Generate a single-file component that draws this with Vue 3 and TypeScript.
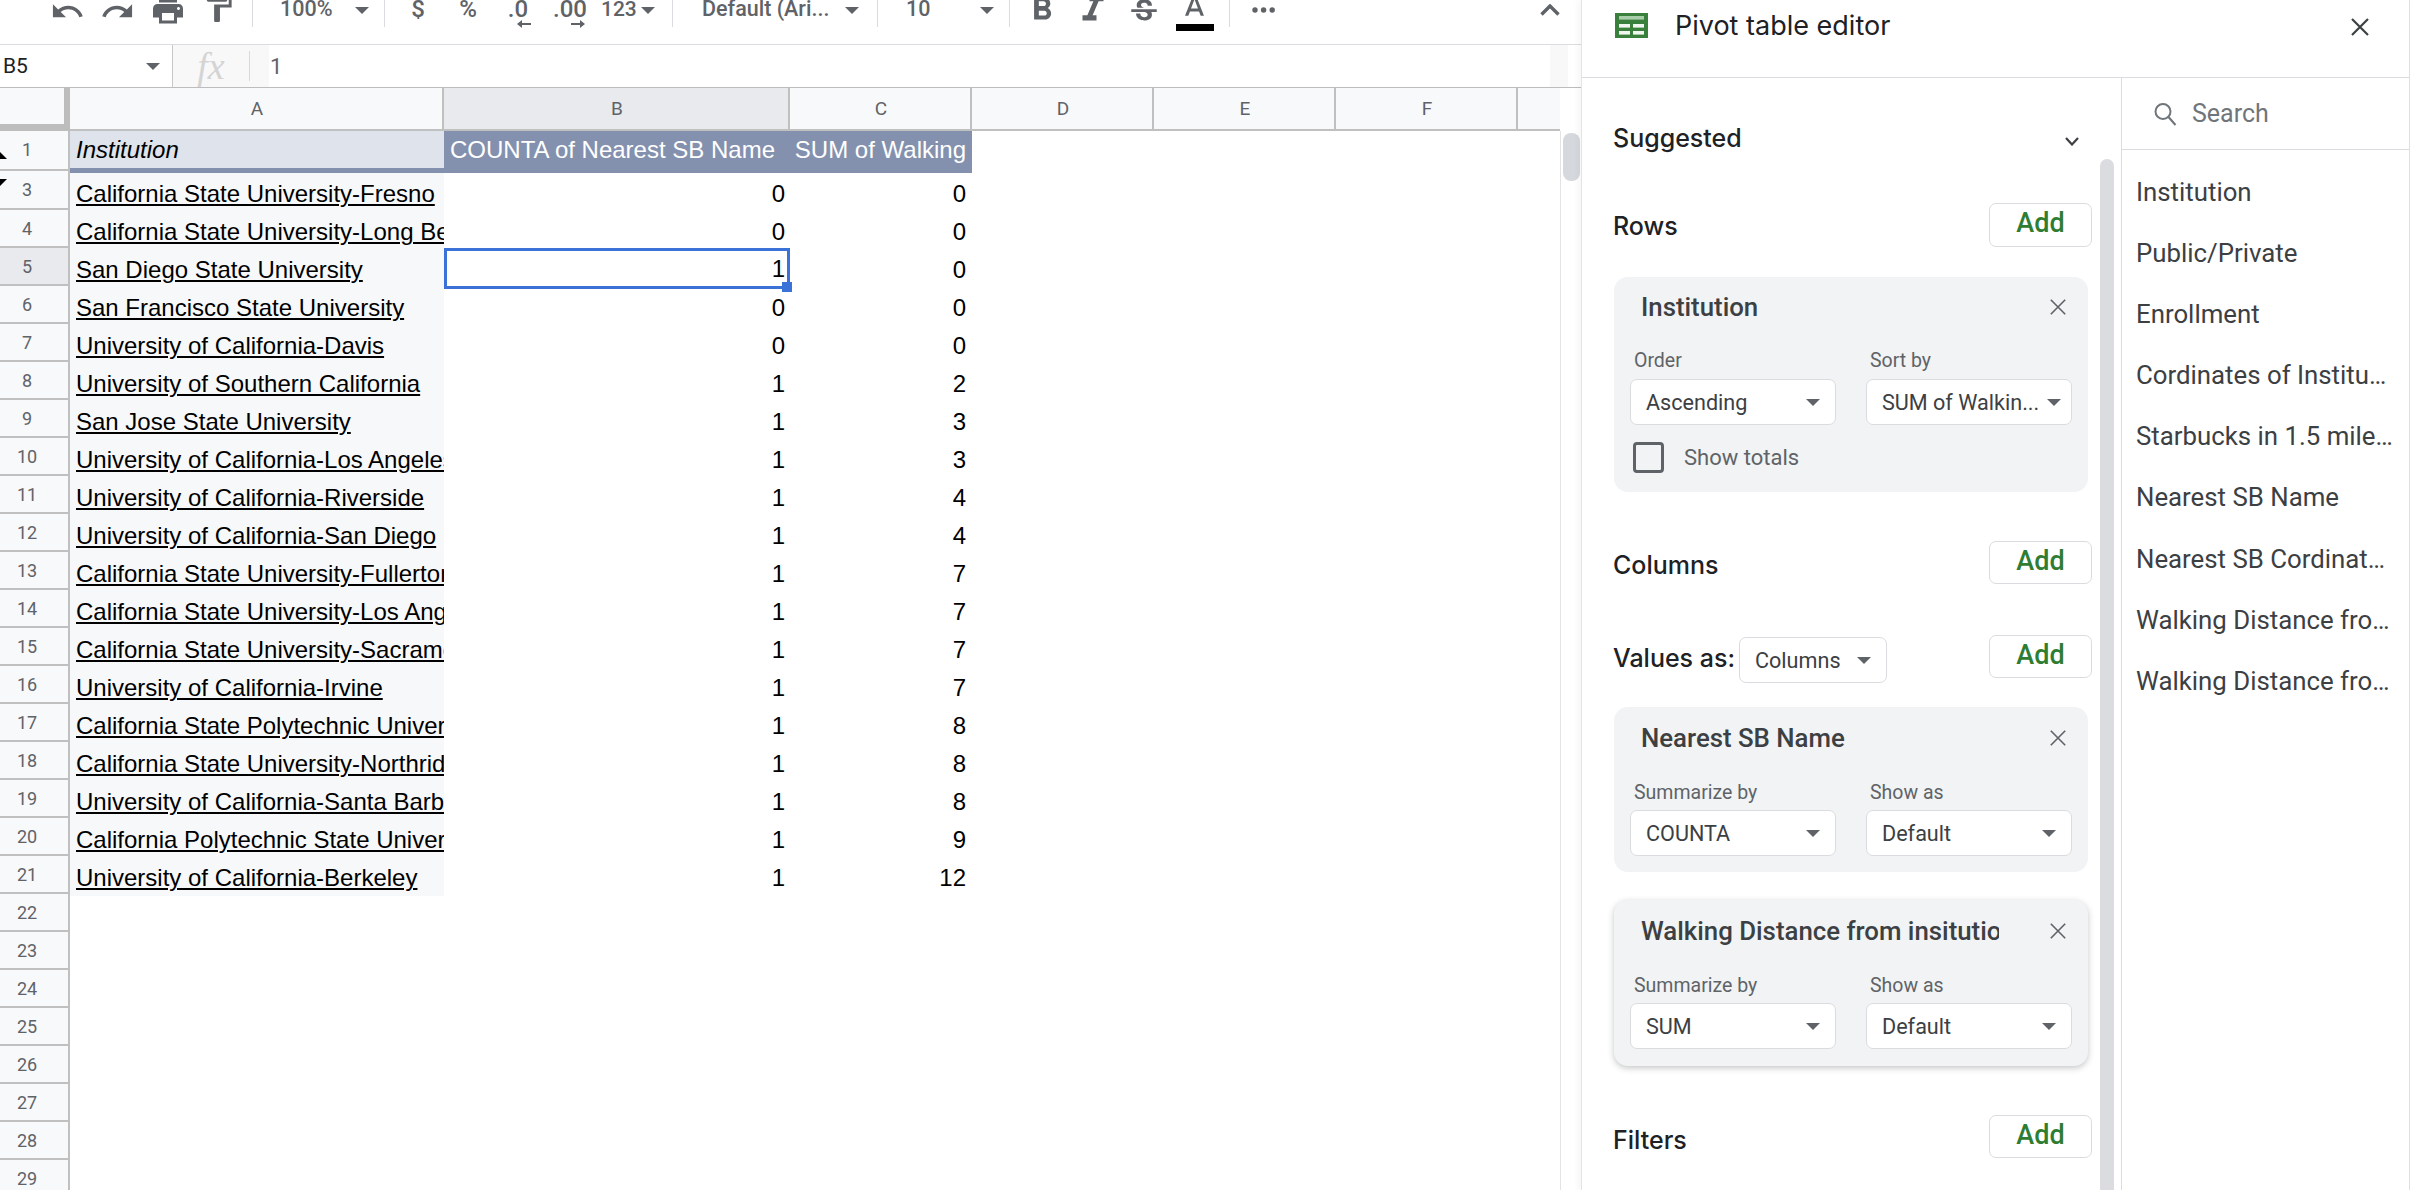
<script setup lang="ts">
interface SheetRow {
  num: number
  name: string
  count: number
  sum: number
}

const colHeads = ['A', 'B', 'C', 'D', 'E', 'F', '']

const rows: SheetRow[] = [
  { num: 3, name: 'California State University-Fresno', count: 0, sum: 0 },
  { num: 4, name: 'California State University-Long Beach', count: 0, sum: 0 },
  { num: 5, name: 'San Diego State University', count: 1, sum: 0 },
  { num: 6, name: 'San Francisco State University', count: 0, sum: 0 },
  { num: 7, name: 'University of California-Davis', count: 0, sum: 0 },
  { num: 8, name: 'University of Southern California', count: 1, sum: 2 },
  { num: 9, name: 'San Jose State University', count: 1, sum: 3 },
  { num: 10, name: 'University of California-Los Angeles', count: 1, sum: 3 },
  { num: 11, name: 'University of California-Riverside', count: 1, sum: 4 },
  { num: 12, name: 'University of California-San Diego', count: 1, sum: 4 },
  { num: 13, name: 'California State University-Fullerton', count: 1, sum: 7 },
  { num: 14, name: 'California State University-Los Angeles', count: 1, sum: 7 },
  { num: 15, name: 'California State University-Sacramento', count: 1, sum: 7 },
  { num: 16, name: 'University of California-Irvine', count: 1, sum: 7 },
  { num: 17, name: 'California State Polytechnic University', count: 1, sum: 8 },
  { num: 18, name: 'California State University-Northridge', count: 1, sum: 8 },
  { num: 19, name: 'University of California-Santa Barbara', count: 1, sum: 8 },
  { num: 20, name: 'California Polytechnic State University', count: 1, sum: 9 },
  { num: 21, name: 'University of California-Berkeley', count: 1, sum: 12 },
]

const rowNums = [3, 4, 5, 6, 7, 8, 9, 10, 11, 12, 13, 14, 15, 16, 17, 18, 19, 20, 21, 22, 23, 24, 25, 26, 27, 28, 29]

const valueCards = [
  { title: 'Nearest SB Name', summarize: 'COUNTA', raised: false },
  { title: 'Walking Distance from insitution', summarize: 'SUM', raised: true },
]

const fields = [
  'Institution',
  'Public/Private',
  'Enrollment',
  'Cordinates of Institution',
  'Starbucks in 1.5 miles of Institution',
  'Nearest SB Name',
  'Nearest SB Cordinates of Institution',
  'Walking Distance from institution',
  'Walking Distance from insitution 2',
]
</script>

<template>
  <div class="app">
    <div class="sheet">
      <div class="toolbar">
        <svg class="ic ic-hist" viewBox="0 0 24 24"><path d="M12.5 8c-2.65 0-5.05.99-6.9 2.6L2 7v9h9l-3.62-3.62c1.39-1.16 3.16-1.88 5.12-1.88 3.54 0 6.55 2.31 7.6 5.5l2.37-.78C21.08 11.03 17.15 8 12.5 8z" /></svg>
        <svg class="ic ic-hist redo" viewBox="0 0 24 24"><path d="M18.4 10.6C16.55 8.99 14.15 8 11.5 8c-4.65 0-8.58 3.03-9.96 7.22L3.9 16c1.05-3.19 4.05-5.5 7.6-5.5 1.95 0 3.73.72 5.12 1.88L13 16h9V7l-3.6 3.6z" /></svg>
        <svg class="ic ic-print" viewBox="0 0 24 24"><path d="M19 8H5c-1.66 0-3 1.34-3 3v6h4v4h12v-4h4v-6c0-1.66-1.34-3-3-3zm-3 11H8v-5h8v5zm3-7c-.55 0-1-.45-1-1s.45-1 1-1 1 .45 1 1-.45 1-1 1zm-1-9H6v4h12V3z" /></svg>
        <svg class="ic ic-paint" viewBox="0 0 24 24"><path d="M18 4V3c0-.55-.45-1-1-1H5c-.55 0-1 .45-1 1v4c0 .55.45 1 1 1h12c.55 0 1-.45 1-1V6h1v4H9v11c0 .55.45 1 1 1h2c.55 0 1-.45 1-1v-9h8V4h-3z" /></svg>
        <i class="sep sep-1"></i>
        <span class="tb-text zoom">100%</span>
        <i class="caret zoom-caret"></i>
        <i class="sep sep-2"></i>
        <span class="tb-text fmt first">$</span>
        <span class="tb-text fmt">%</span>
        <span class="tb-text fmt dec">.0
          <svg class="dec-arrow left" viewBox="0 0 14 10"><path d="M14 4H5V1L0 5l5 4V6h9z" /></svg>
        </span>
        <span class="tb-text fmt dec">.00
          <svg class="dec-arrow right" viewBox="0 0 14 10"><path d="M0 4h9V1l5 4-5 4V6H0z" /></svg>
        </span>
        <span class="tb-text num-fmt">123</span>
        <i class="caret num-caret"></i>
        <i class="sep sep-3"></i>
        <span class="tb-text font-name">Default (Ari...</span>
        <i class="caret font-caret"></i>
        <i class="sep sep-4"></i>
        <span class="tb-text font-size">10</span>
        <i class="caret size-caret"></i>
        <i class="sep sep-5"></i>
        <svg class="ic ic-bold" viewBox="0 0 24 24"><path d="M15.6 10.79c.97-.67 1.65-1.77 1.65-2.79 0-2.26-1.75-4-4-4H7v14h7.04c2.09 0 3.71-1.7 3.71-3.79 0-1.52-.86-2.82-2.15-3.42zM10 6.5h3c.83 0 1.5.67 1.5 1.5s-.67 1.5-1.5 1.5h-3v-3zm3.5 9H10v-3h3.5c.83 0 1.5.67 1.5 1.5s-.67 1.5-1.5 1.5z" /></svg>
        <svg class="ic ic-italic" viewBox="0 0 24 24"><path d="M10 4v3h2.21l-3.42 8H6v3h8v-3h-2.21l3.42-8H18V4z" /></svg>
        <svg class="ic ic-strike" viewBox="0 0 24 24"><path d="M6.85 7.08C6.85 4.37 9.45 3 12.24 3c1.64 0 3 .49 3.9 1.28.77.65 1.46 1.73 1.46 3.24h-3.01c0-.31-.05-.59-.15-.85-.29-.86-1.2-1.28-2.25-1.28-1.86 0-2.34 1.02-2.34 1.7 0 .48.25.88.74 1.21.38.25.77.48 1.41.7H7.39c-.21-.34-.54-.89-.54-1.92zM21 12v-2H3v2h9.62c1.15.45 1.96.75 1.96 1.97 0 1-.81 1.67-2.28 1.67-1.54 0-2.93-.54-2.93-2.51H6.4c0 .55.08 1.13.24 1.58.81 2.29 3.29 3.3 5.67 3.3 2.27 0 5.3-.89 5.3-4.05 0-.3-.01-1.16-.48-1.96H21V12z" /></svg>
        <div class="text-color">
          <svg class="ic ic-color" viewBox="0 0 24 24"><path d="M11 3 5.5 17h2.25l1.12-3h6.25l1.12 3h2.25L13 3h-2zm-1.38 9L12 5.67 14.38 12H9.62z" /></svg>
          <i class="color-bar"></i>
        </div>
        <i class="sep sep-6"></i>
        <svg class="ic ic-more" viewBox="0 0 24 6"><circle cx="3" cy="3" r="2.7" /><circle cx="11.6" cy="3" r="2.7" /><circle cx="20.2" cy="3" r="2.7" /></svg>
        <svg class="ic-collapse" viewBox="0 0 20 12"><path d="M1.5 10.5 10 2l8.5 8.5" /></svg>
      </div>

      <div class="formula-bar">
        <div class="name-box">
          <span>B5</span>
          <i class="caret"></i>
        </div>
        <div class="fx-box"><span class="fx">fx</span><i class="fx-sep"></i></div>
        <span class="formula-value">1</span>
        <i class="formula-end"></i>
      </div>

      <div class="grid-area">
        <div class="row-heads">
          <div class="corner"></div>
          <div class="row-head first">1<i class="freeze up"></i></div>
          <div
            v-for="n in rowNums"
            :key="n"
            class="row-head"
            :class="{ active: n === 5, third: n === 3 }"
          >
            {{ n }}<i v-if="n === 3" class="freeze down"></i>
          </div>
        </div>

        <div class="cells">
          <div class="col-heads">
            <div
              v-for="(c, i) in colHeads"
              :key="i"
              class="col-head"
              :class="{ active: c === 'B' }"
            >
              {{ c }}
            </div>
          </div>
          <div class="row head-row">
            <div class="cell a head-a">Institution</div>
            <div class="cell b head-b">COUNTA of Nearest SB Name</div>
            <div class="cell c head-c">SUM of Walking</div>
          </div>
          <div v-for="r in rows" :key="r.num" class="row" :class="{ short: r.num === 3 }">
            <div class="cell a"><u>{{ r.name }}</u></div>
            <div class="cell b num" :class="{ selected: r.num === 5 }">
              {{ r.count }}<i v-if="r.num === 5" class="handle"></i>
            </div>
            <div class="cell c num">{{ r.sum }}</div>
          </div>
        </div>

        <div class="v-scroll"><div class="v-thumb"></div></div>
      </div>
    </div>

    <aside class="panel">
      <header class="panel-head">
        <svg class="sheet-icon" viewBox="0 0 33 25">
          <rect width="33" height="25" fill="#38803c" />
          <rect x="4" y="3" width="25" height="3.6" fill="#a9cdaa" />
          <rect x="4" y="11" width="11" height="3.6" fill="#f1f6f1" />
          <rect x="18" y="11" width="11" height="3.6" fill="#f1f6f1" />
          <rect x="4" y="18" width="11" height="3.6" fill="#f1f6f1" />
          <rect x="18" y="18" width="11" height="3.6" fill="#f1f6f1" />
        </svg>
        <h1 class="panel-title">Pivot table editor</h1>
        <svg class="close big" viewBox="0 0 20 20"><path d="M2 2l16 16M18 2 2 18" /></svg>
      </header>

      <div class="panel-body">
        <div class="config">
          <div class="section suggested">
            <span class="section-label">Suggested</span>
            <svg class="chev" viewBox="0 0 14 9"><path d="M1 1l6 6.5L13 1" /></svg>
          </div>

          <div class="section rows-head">
            <span class="section-label">Rows</span>
            <button class="add tall">Add</button>
          </div>

          <div class="card row-card">
            <div class="card-title">
              <span>Institution</span>
              <svg class="close" viewBox="0 0 20 20"><path d="M2 2l16 16M18 2 2 18" /></svg>
            </div>
            <div class="fields">
              <div class="field">
                <label>Order</label>
                <div class="select"><span>Ascending</span><i class="caret"></i></div>
              </div>
              <div class="field">
                <label>Sort by</label>
                <div class="select tight"><span>SUM of Walkin...</span><i class="caret"></i></div>
              </div>
            </div>
            <div class="totals">
              <i class="checkbox"></i>
              <span>Show totals</span>
            </div>
          </div>

          <div class="section columns-head">
            <span class="section-label">Columns</span>
            <button class="add">Add</button>
          </div>

          <div class="section values-head">
            <span class="section-label">Values as:</span>
            <div class="select values-select"><span>Columns</span><i class="caret"></i></div>
            <button class="add">Add</button>
          </div>

          <div
            v-for="card in valueCards"
            :key="card.title"
            class="card value-card"
            :class="{ raised: card.raised }"
          >
            <div class="card-title">
              <span class="clip">{{ card.title }}</span>
              <svg class="close" viewBox="0 0 20 20"><path d="M2 2l16 16M18 2 2 18" /></svg>
            </div>
            <div class="fields">
              <div class="field">
                <label>Summarize by</label>
                <div class="select"><span>{{ card.summarize }}</span><i class="caret"></i></div>
              </div>
              <div class="field">
                <label>Show as</label>
                <div class="select"><span>Default</span><i class="caret"></i></div>
              </div>
            </div>
          </div>

          <div class="section filters-head">
            <span class="section-label">Filters</span>
            <button class="add">Add</button>
          </div>

          <div class="panel-scroll"></div>
        </div>

        <div class="field-list">
          <div class="search">
            <svg class="search-icon" viewBox="0 0 24 24"><circle cx="10" cy="9.5" r="7.5" /><path d="M15.5 15l7 8" /></svg>
            <span>Search</span>
          </div>
          <ul>
            <li v-for="f in fields" :key="f">{{ f }}</li>
          </ul>
        </div>
      </div>
    </aside>
  </div>
</template>

<style scoped>
.app {
  display: flex;
  width: 2422px;
  height: 1190px;
  overflow: hidden;
  background: #fff;
  font-family: Roboto, sans-serif;
  color: #3c4043;
}

.sheet {
  width: 1581px;
  flex: none;
  display: flex;
  flex-direction: column;
}

/* toolbar, cut off at the top of the capture */
.toolbar {
  height: 45px;
  flex: none;
  display: flex;
  align-items: flex-start;
  padding-left: 50px;
  border-bottom: 1px solid #dadce0;
  box-sizing: border-box;
  overflow: hidden;
}

.ic {
  flex: none;
  fill: #5f6368;
}

.ic-hist {
  width: 35px;
  height: 35px;
  margin-top: -6px;
}

.redo {
  margin-left: 15px;
}

.ic-print {
  width: 36px;
  height: 36px;
  margin: -8.5px 0 0 15px;
}

.ic-paint {
  width: 35px;
  height: 35px;
  margin: -10px 0 0 15px;
}

.sep {
  flex: none;
  width: 1px;
  height: 27px;
  background: #dadce0;
}

.sep-1 { margin-left: 16px; }
.sep-2 { margin-left: 15px; }
.sep-3 { margin-left: 17px; }
.sep-4 { margin-left: 18px; }
.sep-5 { margin-left: 15px; }
.sep-6 { margin-left: 15px; }

.tb-text {
  flex: none;
  font-size: 21.5px;
  font-weight: 500;
  line-height: 24px;
  margin-top: -3px;
  color: #5f6368;
  white-space: nowrap;
}

.caret {
  flex: none;
  display: block;
  width: 0;
  height: 0;
  border-left: 7px solid transparent;
  border-right: 7px solid transparent;
  border-top: 7px solid #5f6368;
}

.toolbar .caret {
  margin-top: 7px;
}

.zoom { margin-left: 27px; width: 52px; }
.zoom-caret { margin-left: 23px; }

.fmt {
  position: relative;
  width: 30px;
  margin-left: 20px;
  text-align: center;
  font-size: 24px;
}

.fmt.first { margin-left: 18px; }

.dec-arrow {
  position: absolute;
  top: 22px;
  width: 14px;
  height: 10px;
  fill: #5f6368;
}

.dec-arrow.left { left: 14px; }
.dec-arrow.right { left: 18px; }

.num-fmt { margin-left: 18px; width: 36px; font-size: 21px; }
.num-caret { margin-left: 4px; }
.font-name { margin-left: 29px; width: 125px; }
.font-caret { margin-left: 18px; }
.font-size { margin-left: 28px; width: 24px; }
.size-caret { margin-left: 50px; }

.ic-bold {
  width: 38px;
  height: 38px;
  margin: -9px 0 0 13px;
}

.ic-italic {
  width: 42px;
  height: 42px;
  margin: -11.5px 0 0 11px;
}

.ic-strike {
  width: 34px;
  height: 34px;
  margin: -5.5px 0 0 13px;
}

.text-color {
  flex: none;
  display: flex;
  flex-direction: column;
  width: 38px;
  margin-left: 15px;
  margin-top: -9px;
}

.ic-color {
  width: 35px;
  height: 35px;
  margin-left: 1px;
  margin-bottom: -2px;
}

.color-bar {
  display: block;
  height: 7px;
  background: #000;
}

.ic-more {
  width: 24px;
  height: 6px;
  margin: 7px 0 0 22px;
}

.ic-collapse {
  flex: none;
  width: 20px;
  height: 12px;
  margin: 4px 21px 0 auto;
  fill: none;
  stroke: #5f6368;
  stroke-width: 3.4;
}

/* formula bar */
.formula-bar {
  height: 43px;
  flex: none;
  display: flex;
  align-items: center;
  border-bottom: 1px solid #bdbdbd;
  box-sizing: border-box;
}

.name-box {
  width: 173px;
  height: 100%;
  flex: none;
  display: flex;
  align-items: center;
  justify-content: space-between;
  box-sizing: border-box;
  padding: 0 12px 0 3px;
  border-right: 1px solid #c8c8c8;
  font-size: 21px;
  color: #202124;
}

.fx-box {
  width: 96px;
  height: 100%;
  flex: none;
  display: flex;
  align-items: center;
  background: #f8f8f8;
}

.fx {
  width: 76px;
  text-align: center;
  font-family: "Liberation Serif", serif;
  font-style: italic;
  font-size: 38px;
  line-height: 38px;
  color: #d4d4d4;
}

.fx-sep {
  width: 1px;
  height: 30px;
  background: #d9d9d9;
}

.formula-value {
  margin-left: 1px;
  font-size: 22px;
  color: #5f6368;
}

.formula-end {
  width: 18px;
  height: 100%;
  margin: 0 13px 0 auto;
  background: #f8f8f8;
}

/* grid */
.grid-area {
  flex: 1;
  min-height: 0;
  display: flex;
  overflow: hidden;
}

.row-heads {
  width: 70px;
  flex: none;
}

.corner {
  height: 43px;
  box-sizing: border-box;
  background: #f8f9fa;
  border-right: 6px solid #bdbdbd;
  border-bottom: 7px solid #bdbdbd;
}

.row-head {
  position: relative;
  height: 38px;
  box-sizing: border-box;
  padding-right: 14px;
  background: #f8f9fa;
  border-right: 2px solid #c0c0c0;
  border-bottom: 2px solid #c0c0c0;
  text-align: center;
  font-size: 18px;
  line-height: 38px;
  color: #5f6368;
}

.row-head.first { height: 40px; line-height: 38px; }
.row-head.third { height: 39px; line-height: 37px; }
.row-head.active { background: #e8eaed; }

.freeze {
  position: absolute;
  left: 0;
  width: 0;
  height: 0;
  border-style: solid;
}

.freeze.up {
  top: 21px;
  border-width: 0 7px 7px 0;
  border-color: transparent transparent #000 transparent;
}

.freeze.down {
  top: 8px;
  border-width: 7px 7px 0 0;
  border-color: #000 transparent transparent transparent;
}

.cells {
  width: 1490px;
  flex: none;
  overflow: hidden;
}

.col-heads {
  display: grid;
  grid-template-columns: 374px 346px 182px 182px 182px 182px 42px;
  height: 43px;
}

.col-head {
  box-sizing: border-box;
  padding-left: 2px;
  background: #f8f9fa;
  border-right: 2px solid #c0c0c0;
  border-bottom: 2px solid #c0c0c0;
  text-align: center;
  font-size: 19px;
  line-height: 41px;
  color: #5f6368;
}

.col-head.active { background: #e8eaed; }
.col-head:last-child { border-right: none; }

.row {
  display: grid;
  grid-template-columns: 374px 346px 182px;
  height: 38px;
  font-family: "Liberation Sans", Arial, sans-serif;
  font-size: 24px;
  color: #000;
}

.row.short { height: 37px; }
.head-row { height: 42px; }

.cell {
  position: relative;
  box-sizing: border-box;
  padding-top: 4px;
  line-height: 36px;
  white-space: nowrap;
}

.row.short .cell { padding-top: 3px; }

.cell.a {
  padding-left: 6px;
  overflow: hidden;
  background: #f7f8fa;
}

.cell.a u {
  text-decoration-thickness: 2px;
  text-underline-offset: 2px;
}

.cell.num { text-align: right; }
.cell.b.num { padding-right: 5px; }
.cell.c.num { padding-right: 6px; }

.cell.head-a {
  background: #dee3ec;
  border-bottom: 5px solid #8491ae;
  font-style: italic;
  padding-top: 1px;
}

.head-b,
.head-c {
  background: #8491ae;
  color: #fff;
}

.cell.head-b,
.cell.head-c { padding-top: 1px; }

.head-b { padding-left: 6px; }
.head-c { text-align: right; padding-right: 6px; }

.cell.selected {
  z-index: 1;
  border: 3px solid #3a72d8;
  margin-bottom: -1px;
  padding-top: 1px;
  line-height: 34px;
}

.cell.b.selected { padding-right: 2px; }

.handle {
  position: absolute;
  right: -5px;
  bottom: -6px;
  width: 10px;
  height: 10px;
  background: #3a72d8;
}

.v-scroll {
  position: relative;
  width: 21px;
  flex: none;
  margin-top: 43px;
  border-left: 1px solid #e3e3e3;
  box-sizing: border-box;
}

.v-thumb {
  width: 17px;
  height: 48px;
  margin: 2px 0 0 2px;
  border-radius: 8px;
  background: #d5d8dc;
}

/* pivot editor */
.panel {
  position: relative;
  width: 829px;
  flex: none;
  display: flex;
  flex-direction: column;
  box-sizing: border-box;
  border-left: 1px solid #e4e4e4;
  border-right: 1px solid #e0e0e0;
  box-shadow: -3px 0 6px rgba(0, 0, 0, 0.04);
  background: #fff;
}

.panel-head {
  height: 78px;
  flex: none;
  display: flex;
  align-items: flex-start;
  box-sizing: border-box;
  padding-left: 33px;
  border-bottom: 1px solid #dadce0;
}

.sheet-icon {
  width: 33px;
  height: 25px;
  margin-top: 13px;
}

.panel-title {
  margin: 7px 0 0 27px;
  font-family: Inter, sans-serif;
  font-size: 27px;
  line-height: 38px;
  font-weight: 400;
  color: #202124;
}

.close {
  flex: none;
  width: 20px;
  height: 20px;
  fill: none;
  stroke: #5f6368;
  stroke-width: 2;
}

.close.big {
  margin: 17px 39px 0 auto;
  stroke: #3c4043;
  stroke-width: 2.2;
}

.panel-body {
  flex: 1;
  min-height: 0;
  display: flex;
}

.config {
  position: relative;
  width: 540px;
  flex: none;
  box-sizing: border-box;
  padding-left: 31px;
  border-right: 1px solid #dadce0;
  overflow: hidden;
}

.section {
  display: flex;
  align-items: center;
  width: 479px;
}

.section-label {
  font-family: Inter, sans-serif;
  font-size: 25px;
  font-weight: 500;
  color: #202124;
  white-space: nowrap;
}

.suggested {
  justify-content: space-between;
  height: 40px;
  margin-top: 40px;
  padding-right: 13px;
  box-sizing: border-box;
}

.chev {
  width: 14px;
  height: 9px;
  margin-top: 6px;
  fill: none;
  stroke: #3c4043;
  stroke-width: 2.2;
}

.add {
  flex: none;
  width: 103px;
  height: 43px;
  margin-left: auto;
  padding: 0 0 4px;
  box-sizing: border-box;
  background: #fff;
  border: 1px solid #dadce0;
  border-radius: 7px;
  font-family: Roboto, sans-serif;
  font-size: 27px;
  font-weight: 500;
  color: #2e7d32;
}

.add.tall { height: 44px; }

.rows-head {
  height: 44px;
  margin-top: 45px;
}

.rows-head .section-label { padding-top: 2px; }

.columns-head {
  height: 43px;
  margin-top: 49px;
}

.columns-head .section-label { padding-top: 5px; }

.values-head {
  height: 48px;
  margin-top: 51px;
  align-items: flex-start;
}

.values-head .section-label {
  width: 126px;
  line-height: 46px;
}

.values-select {
  width: 148px;
  margin-top: 2px;
}

.filters-head {
  height: 43px;
  margin-top: 49px;
}

.filters-head .section-label { padding-top: 6px; }

.card {
  width: 474px;
  margin-left: 1px;
  box-sizing: border-box;
  padding: 0 16px;
  border-radius: 14px;
  background: #f1f3f4;
}

.row-card {
  height: 215px;
  margin-top: 30px;
}

.value-card {
  height: 165px;
  margin-top: 24px;
}

.value-card.raised {
  height: 166px;
  margin-top: 28px;
  box-shadow: 0 2px 6px rgba(60, 64, 67, 0.3);
}

.card-title {
  display: flex;
  align-items: center;
  justify-content: space-between;
  height: 60px;
  padding: 0 3px 0 11px;
  font-size: 25.8px;
  font-weight: 500;
  color: #3c4043;
}

.value-card .card-title { height: 62px; }

.clip {
  width: 358px;
  overflow: hidden;
  white-space: nowrap;
}

.card-title .close {
  width: 18px;
  height: 18px;
  margin-right: 2px;
  stroke-width: 1.8;
}

.fields {
  display: grid;
  grid-template-columns: 206px 206px;
  column-gap: 30px;
}

.field label {
  display: block;
  padding-left: 4px;
  font-size: 19.5px;
  line-height: 24px;
  color: #5f6368;
}

.row-card .field label { margin-top: 12px; margin-bottom: 6px; }
.value-card .field label { margin-top: 12px; margin-bottom: 5px; }

.select {
  display: flex;
  align-items: center;
  justify-content: space-between;
  height: 46px;
  box-sizing: border-box;
  padding: 0 15px 0 15px;
  background: #fff;
  border: 1px solid #dadce0;
  border-radius: 7px;
  font-size: 21.6px;
  color: #3c4043;
  white-space: nowrap;
}

.select.tight {
  padding: 0 10px 0 15px;
}

.totals {
  display: flex;
  align-items: center;
  margin-top: 17px;
  padding-left: 3px;
  font-size: 22px;
  color: #5f6368;
}

.checkbox {
  width: 31px;
  height: 31px;
  margin-right: 20px;
  box-sizing: border-box;
  border: 3px solid #5f6368;
  border-radius: 4px;
}

.panel-scroll {
  position: absolute;
  top: 81px;
  bottom: 0;
  left: 518px;
  width: 14px;
  border-radius: 7px 7px 0 0;
  background: #dadce0;
}

.field-list {
  flex: 1;
  min-width: 0;
}

.search {
  display: flex;
  align-items: center;
  height: 72px;
  box-sizing: border-box;
  padding-left: 31px;
  border-bottom: 1px solid #dadce0;
  font-size: 25px;
  color: #70757a;
}

.search-icon {
  width: 24px;
  height: 24px;
  margin-right: 15px;
  fill: none;
  stroke: #70757a;
  stroke-width: 2;
}

ul {
  margin: 12px 0 0;
  padding: 0 0 0 14px;
  list-style: none;
}

li {
  height: 61.1px;
  width: 257.5px;
  overflow: hidden;
  text-overflow: ellipsis;
  white-space: nowrap;
  font-size: 25.8px;
  line-height: 61px;
  color: #3c4043;
}
</style>

<style>
html,
body {
  margin: 0;
  overflow: hidden;
}
</style>
